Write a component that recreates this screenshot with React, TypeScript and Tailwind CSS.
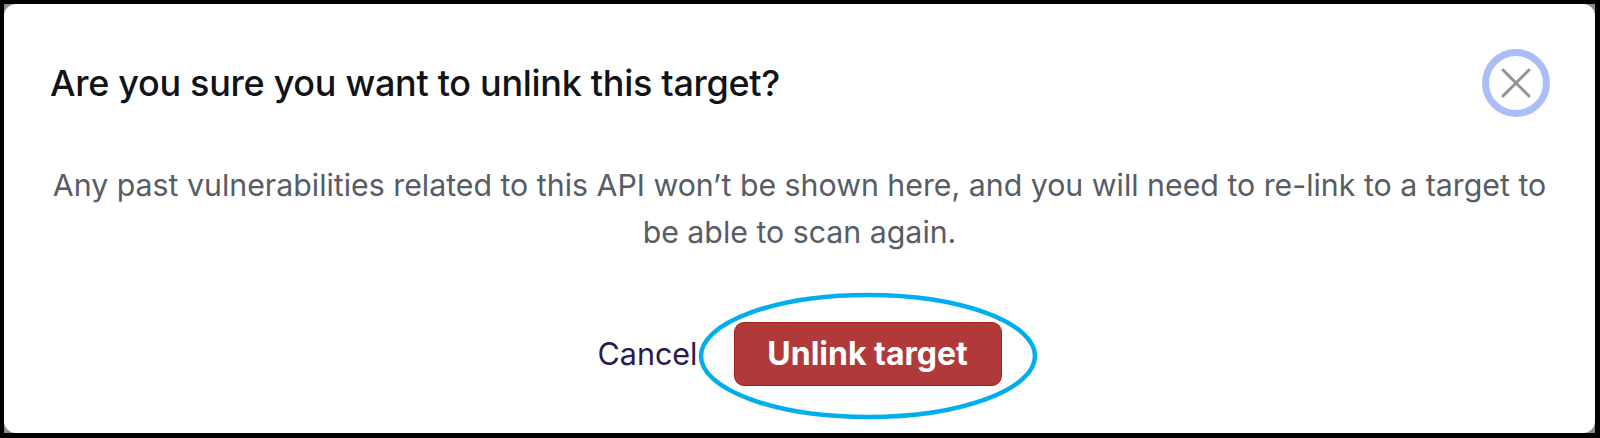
export default function App() {
  return (
    <div className="w-[1600px] h-[438px] bg-black pl-[4px] pt-[4px] pr-[5px] pb-[5px] font-['Inter',sans-serif]">
      <div className="w-full h-full bg-[#8b8e96]">
        <div className="relative w-full h-full bg-white rounded-[12px] px-[46px]">
          {/* Header */}
          <div className="flex items-center justify-between h-[158px]">
            <h2 className="text-[36px] font-medium text-[#111318] tracking-[-0.3px]">Are you sure you want to unlink this target?</h2>
            <button className="w-[68px] h-[68px] -mr-[1px] rounded-full border-[7px] border-[#aabdf7] flex items-center justify-center">
              <svg width="30" height="30" viewBox="0 0 30 30" fill="none" stroke="#929292" strokeWidth="3" strokeLinecap="round">
                <path d="M2 2L28 28M28 2L2 28" />
              </svg>
            </button>
          </div>
          <p className="text-center text-[30.3px] leading-[47px] text-[#575c66] -mx-[20px]">
            Any past vulnerabilities related to this API won’t be shown here, and you will need to re-link to a target to
            <br />
            be able to scan again.
          </p>
          <div className="flex items-center justify-center gap-[36px] mt-[66px]">
            <button className="text-[30.5px] text-[#2b1a4c]">Cancel</button>
            <button className="w-[268px] h-[64px] rounded-[10px] bg-[#b03a3a] border border-[#a81e1e] text-white text-[32px] font-bold">Unlink target</button>
          </div>
          {/* annotation ring */}
          <svg className="absolute left-[690px] top-[285px]" width="348" height="134" viewBox="0 0 348 134">
            <ellipse cx="174" cy="67" rx="167" ry="61" fill="none" stroke="#00aeef" strokeWidth="4.5" />
          </svg>
        </div>
      </div>
    </div>
  );
}
